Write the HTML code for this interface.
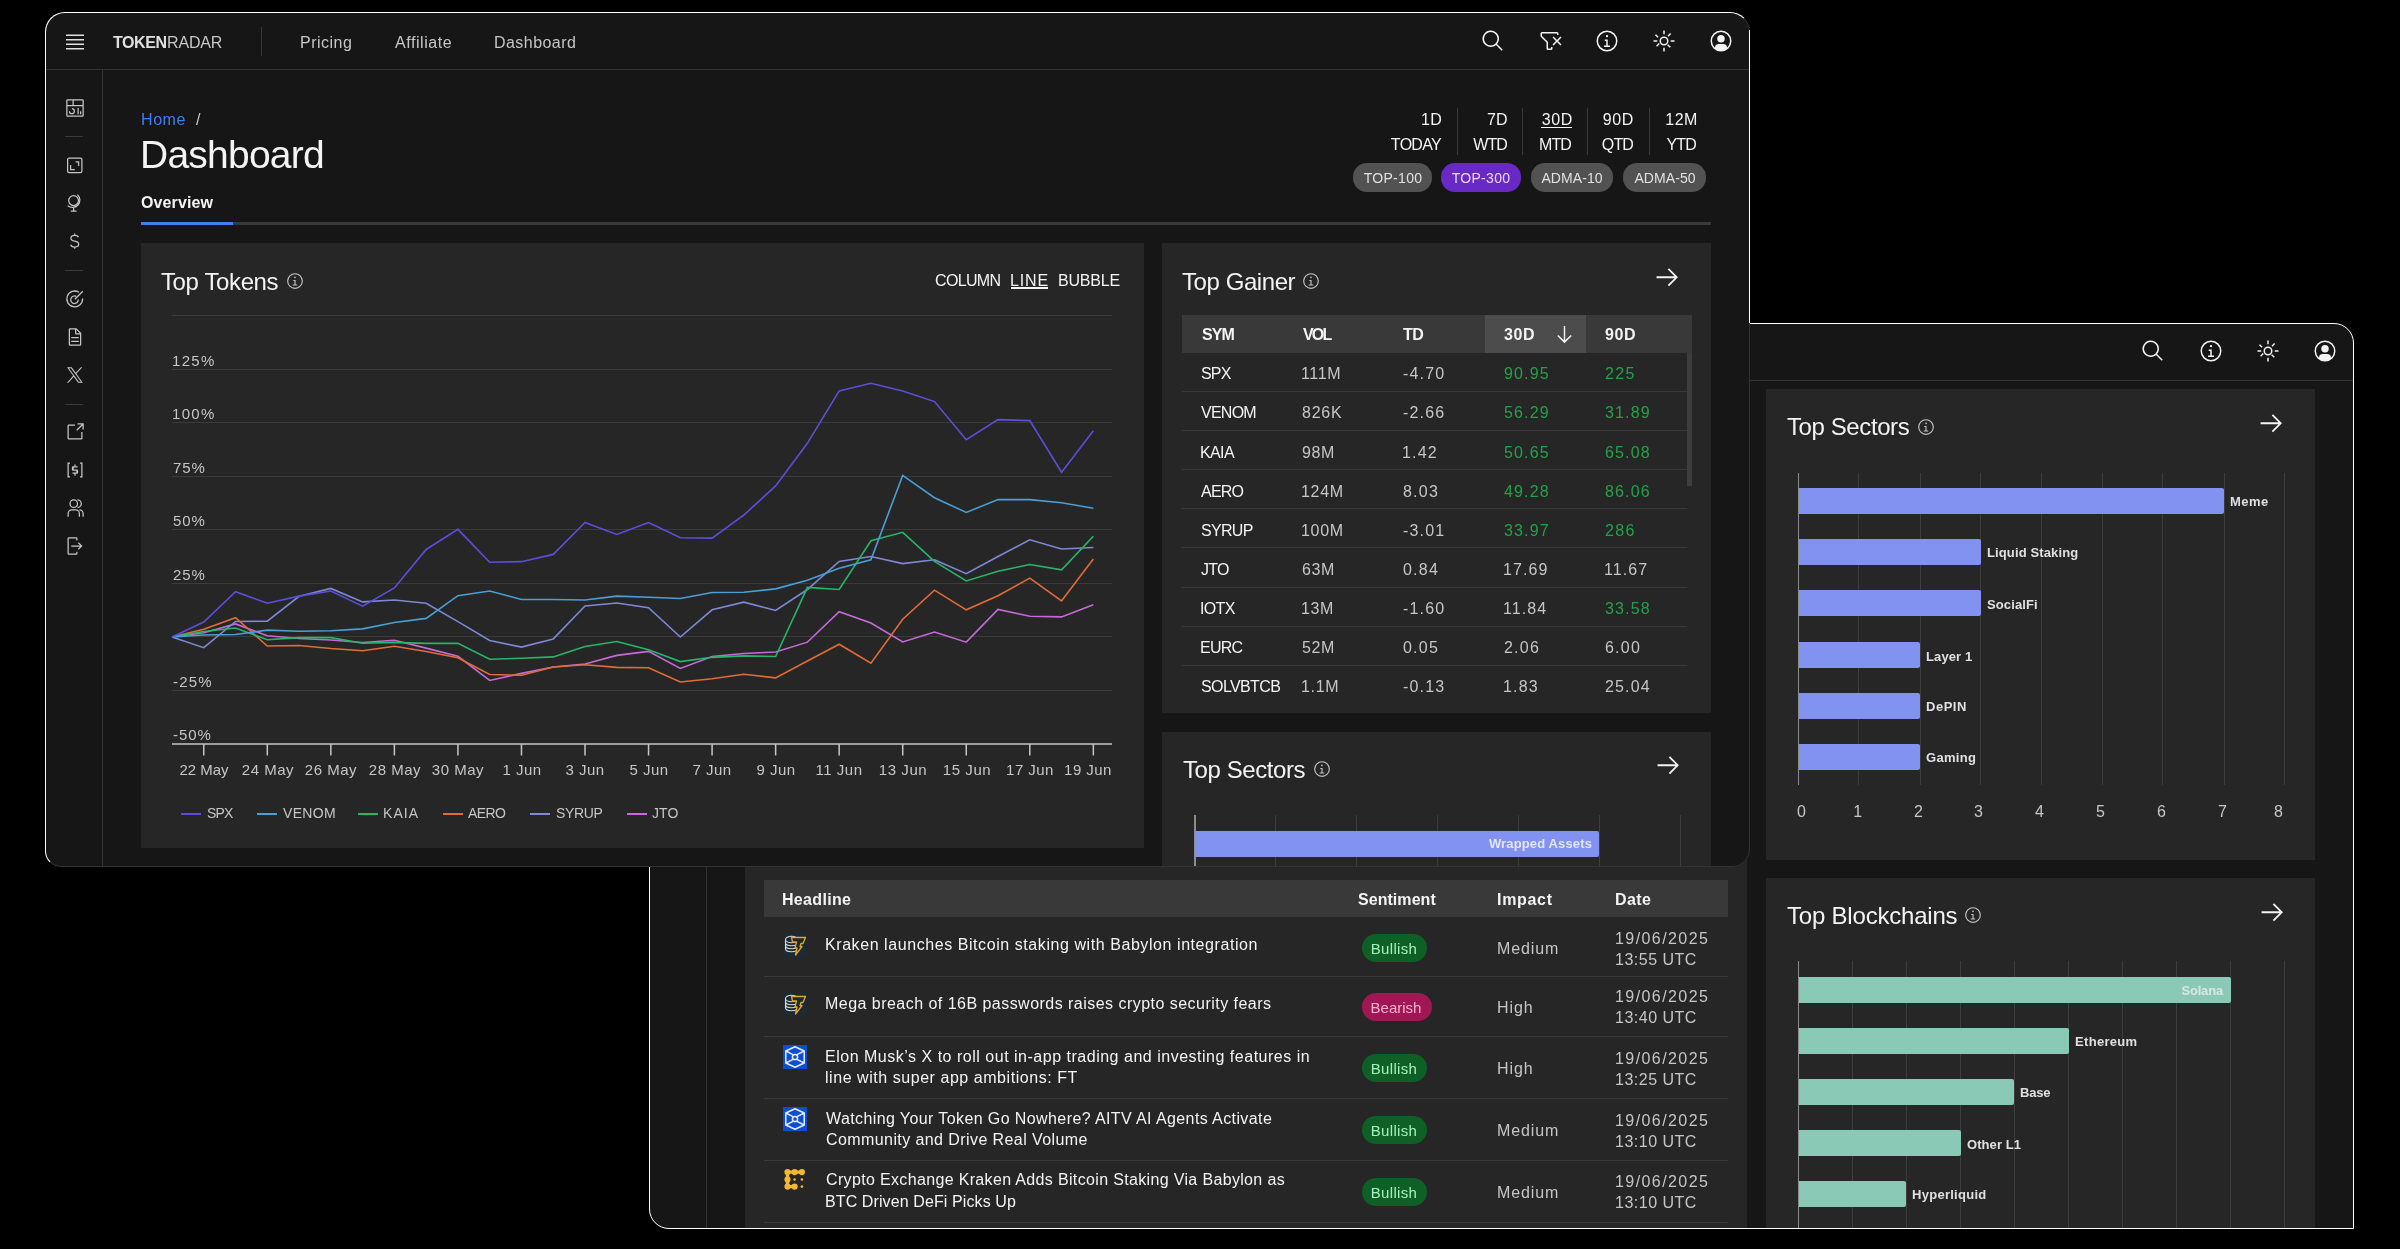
<!DOCTYPE html><html><head><meta charset="utf-8"><style>
html,body{margin:0;padding:0;}
body{width:2400px;height:1249px;background:#000;position:relative;overflow:hidden;font-family:"Liberation Sans", sans-serif;}
.win{position:absolute;overflow:hidden;background:#161616;}
.win div{will-change:transform;}
</style></head><body>
<div class="win" style="left:649px;top:323px;width:1705px;height:906px;border-radius:0 20px 0 20px;z-index:1">
<div style="position:absolute;left:0px;top:57px;width:1705px;height:1px;background:#333333;"></div>
<svg style="position:absolute;left:1492.00px;top:16.00px" width="24" height="24" viewBox="0 0 32 32" fill="#f4f4f4"><path d="M29,27.5859l-7.5521-7.5521a11.0177,11.0177,0,1,0-1.4141,1.4141L27.5859,29ZM4,13a9,9,0,1,1,9,9A9.01,9.01,0,0,1,4,13Z"/></svg>
<svg style="position:absolute;left:1550.00px;top:16.00px" width="24" height="24" viewBox="0 0 32 32" fill="#f4f4f4"><path d="M17 22L17 14 13 14 13 16 15 16 15 22 12 22 12 24 20 24 20 22 17 22zM16 8a1.5 1.5 0 101.5 1.5A1.5 1.5 0 0016 8z"/><path d="M16,30A14,14,0,1,1,30,16,14,14,0,0,1,16,30ZM16,4A12,12,0,1,0,28,16,12,12,0,0,0,16,4Z"/></svg>
<svg style="position:absolute;left:1607.00px;top:16.00px" width="24" height="24" viewBox="0 0 32 32" fill="#f4f4f4"><path d="M16,12.0005a4,4,0,1,1-4,4,4.0045,4.0045,0,0,1,4-4m0-2a6,6,0,1,0,6,6,6,6,0,0,0-6-6Z"/><path d="M5.394 6.813H7.394V11.813H5.394z" transform="rotate(-45 6.394 9.313)"/><path d="M2 15.001H7V17.001H2z"/><path d="M5.394 20.188H10.394V22.188H5.394z" transform="rotate(-45 7.894 21.188)"/><path d="M15 25.001H17V30.001H15z"/><path d="M21.606 20.187H23.606V25.187H21.606z" transform="rotate(-45 22.606 22.687)"/><path d="M25 15.001H30V17.001H25z"/><path d="M20.606 6.813H25.606V8.813H20.606z" transform="rotate(-45 23.106 7.813)"/><path d="M15 2.001H17V7.001H15z"/></svg>
<svg style="position:absolute;left:1663.50px;top:16.00px" width="24" height="24" viewBox="0 0 32 32" fill="#f4f4f4"><path d="M16,8a5,5,0,1,0,5,5A5,5,0,0,0,16,8Z"/><path d="M16,2A14,14,0,1,0,30,16,14.0158,14.0158,0,0,0,16,2Zm7.9925,22.9258A5.0016,5.0016,0,0,0,19,20H13a5.0016,5.0016,0,0,0-4.9925,4.9258,12,12,0,1,1,15.985,0Z"/></svg>
<div style="position:absolute;left:57px;top:58px;width:1px;height:848px;background:#333333;"></div>
<div style="position:absolute;left:96px;top:58px;width:1002px;height:848px;background:#262626;"></div>
<div style="position:absolute;left:1117px;top:66px;width:549px;height:470.5px;background:#262626;"></div>
<div style="position:absolute;left:1117px;top:555px;width:549px;height:351px;background:#262626;"></div>
<div style="position:absolute;left:115px;top:557px;width:964px;height:37px;background:#393939;"></div>
<div style="position:absolute;top:569.35px;font-size:16px;line-height:16px;color:#f4f4f4;font-weight:700;white-space:nowrap;letter-spacing:0.316px;left:133.25px;">Headline</div>
<div style="position:absolute;top:569.35px;font-size:16px;line-height:16px;color:#f4f4f4;font-weight:700;white-space:nowrap;letter-spacing:0.048px;left:708.50px;">Sentiment</div>
<div style="position:absolute;top:569.35px;font-size:16px;line-height:16px;color:#f4f4f4;font-weight:700;white-space:nowrap;letter-spacing:0.692px;left:848.40px;">Impact</div>
<div style="position:absolute;top:569.35px;font-size:16px;line-height:16px;color:#f4f4f4;font-weight:700;white-space:nowrap;letter-spacing:0.406px;left:965.60px;">Date</div>
<svg style="position:absolute;left:134px;top:610px;overflow:visible;" width="24" height="24" viewBox="0 0 24 24"><rect x="0" y="0" width="24" height="24" fill="#1e2a33"/><g fill="none" stroke="#d9d9d9" stroke-width="1.1"><ellipse cx="8.5" cy="6.5" rx="6" ry="3.3"/><path d="M2.5 9.5 q0 3.3 6 3.3 q3 0 5-1"/><path d="M2.5 12.5 q0 3.3 6 3.3 q3 0 5-1"/><path d="M2.5 15.5 q0 3.3 6 3.3 q3 0 5-1"/><path d="M2.5 6.5 V16"/></g><path d="M8.5 4.5 H22.5 L20 10.5 H18 L17 13.5 H19 L12.5 22 L14 15 H12 L13.5 9 H9.5 Z" fill="#1e2a33" stroke="#e0a92a" stroke-width="1.3" stroke-linejoin="round"/></svg>
<div style="position:absolute;top:614.35px;font-size:16px;line-height:16px;color:#f4f4f4;font-weight:400;white-space:nowrap;letter-spacing:0.569px;left:176.25px;">Kraken launches Bitcoin staking with Babylon integration</div>
<div style="position:absolute;left:712.5px;top:611px;width:64.79999999999995px;height:28px;background:#0e6027;border-radius:14px;"></div>
<div style="position:absolute;top:618.20px;font-size:15px;line-height:15px;color:#a7f0ba;font-weight:400;white-space:nowrap;letter-spacing:0.326px;left:245.06px;width:1000px;text-align:center;">Bullish</div>
<div style="position:absolute;top:618.35px;font-size:16px;line-height:16px;color:#c6c6c6;font-weight:400;white-space:nowrap;letter-spacing:0.884px;left:848.40px;">Medium</div>
<div style="position:absolute;top:607.75px;font-size:16px;line-height:16px;color:#c6c6c6;font-weight:400;white-space:nowrap;letter-spacing:1.424px;left:965.60px;">19/06/2025</div>
<div style="position:absolute;top:628.75px;font-size:16px;line-height:16px;color:#c6c6c6;font-weight:400;white-space:nowrap;letter-spacing:0.498px;left:965.60px;">13:55 UTC</div>
<div style="position:absolute;left:115px;top:653px;width:964px;height:1px;background:#393939;"></div>
<svg style="position:absolute;left:134px;top:669px;overflow:visible;" width="24" height="24" viewBox="0 0 24 24"><rect x="0" y="0" width="24" height="24" fill="#1e2a33"/><g fill="none" stroke="#d9d9d9" stroke-width="1.1"><ellipse cx="8.5" cy="6.5" rx="6" ry="3.3"/><path d="M2.5 9.5 q0 3.3 6 3.3 q3 0 5-1"/><path d="M2.5 12.5 q0 3.3 6 3.3 q3 0 5-1"/><path d="M2.5 15.5 q0 3.3 6 3.3 q3 0 5-1"/><path d="M2.5 6.5 V16"/></g><path d="M8.5 4.5 H22.5 L20 10.5 H18 L17 13.5 H19 L12.5 22 L14 15 H12 L13.5 9 H9.5 Z" fill="#1e2a33" stroke="#e0a92a" stroke-width="1.3" stroke-linejoin="round"/></svg>
<div style="position:absolute;top:673.05px;font-size:16px;line-height:16px;color:#f4f4f4;font-weight:400;white-space:nowrap;letter-spacing:0.469px;left:176.25px;">Mega breach of 16B passwords raises crypto security fears</div>
<div style="position:absolute;left:712.5px;top:669.7px;width:69.70000000000005px;height:28.0px;background:#9f1853;border-radius:14px;"></div>
<div style="position:absolute;top:676.90px;font-size:15px;line-height:15px;color:#ffafd2;font-weight:400;white-space:nowrap;letter-spacing:-0.003px;left:247.35px;width:1000px;text-align:center;">Bearish</div>
<div style="position:absolute;top:677.05px;font-size:16px;line-height:16px;color:#c6c6c6;font-weight:400;white-space:nowrap;letter-spacing:0.897px;left:848.40px;">High</div>
<div style="position:absolute;top:666.45px;font-size:16px;line-height:16px;color:#c6c6c6;font-weight:400;white-space:nowrap;letter-spacing:1.424px;left:965.60px;">19/06/2025</div>
<div style="position:absolute;top:687.45px;font-size:16px;line-height:16px;color:#c6c6c6;font-weight:400;white-space:nowrap;letter-spacing:0.498px;left:965.60px;">13:40 UTC</div>
<div style="position:absolute;left:115px;top:712.5px;width:964px;height:1.0px;background:#393939;"></div>
<svg style="position:absolute;left:134px;top:721.7px;overflow:visible;" width="24" height="24" viewBox="0 0 24 24"><rect x="0" y="0" width="24" height="24" fill="#0b4fd0"/><g fill="none" stroke="#e6ecff" stroke-width="1.5" stroke-linejoin="round"><path d="M12 1.8 L21.2 6 V18 L12 22.2 L2.8 18 V6 Z"/><path d="M2.8 6 L10 9.6 M21.2 6 L14 9.6 M2.8 18 L10 14.4 M21.2 18 L14 14.4"/><circle cx="12" cy="12" r="2.6"/></g></svg>
<div style="position:absolute;top:725.65px;font-size:16px;line-height:16px;color:#f4f4f4;font-weight:400;white-space:nowrap;letter-spacing:0.51px;left:176.25px;">Elon Musk’s X to roll out in-app trading and investing features in</div>
<div style="position:absolute;top:747.05px;font-size:16px;line-height:16px;color:#f4f4f4;font-weight:400;white-space:nowrap;letter-spacing:0.547px;left:176.25px;">line with super app ambitions: FT</div>
<div style="position:absolute;left:712.5px;top:730.8px;width:64.79999999999995px;height:28.0px;background:#0e6027;border-radius:14px;"></div>
<div style="position:absolute;top:738.00px;font-size:15px;line-height:15px;color:#a7f0ba;font-weight:400;white-space:nowrap;letter-spacing:0.326px;left:245.06px;width:1000px;text-align:center;">Bullish</div>
<div style="position:absolute;top:738.15px;font-size:16px;line-height:16px;color:#c6c6c6;font-weight:400;white-space:nowrap;letter-spacing:0.897px;left:848.40px;">High</div>
<div style="position:absolute;top:727.55px;font-size:16px;line-height:16px;color:#c6c6c6;font-weight:400;white-space:nowrap;letter-spacing:1.424px;left:965.60px;">19/06/2025</div>
<div style="position:absolute;top:748.55px;font-size:16px;line-height:16px;color:#c6c6c6;font-weight:400;white-space:nowrap;letter-spacing:0.498px;left:965.60px;">13:25 UTC</div>
<div style="position:absolute;left:115px;top:774.5px;width:964px;height:1.0px;background:#393939;"></div>
<svg style="position:absolute;left:134px;top:783.7px;overflow:visible;" width="24" height="24" viewBox="0 0 24 24"><rect x="0" y="0" width="24" height="24" fill="#0b4fd0"/><g fill="none" stroke="#e6ecff" stroke-width="1.5" stroke-linejoin="round"><path d="M12 1.8 L21.2 6 V18 L12 22.2 L2.8 18 V6 Z"/><path d="M2.8 6 L10 9.6 M21.2 6 L14 9.6 M2.8 18 L10 14.4 M21.2 18 L14 14.4"/><circle cx="12" cy="12" r="2.6"/></g></svg>
<div style="position:absolute;top:787.85px;font-size:16px;line-height:16px;color:#f4f4f4;font-weight:400;white-space:nowrap;letter-spacing:0.399px;left:177.25px;">Watching Your Token Go Nowhere? AITV AI Agents Activate</div>
<div style="position:absolute;top:809.25px;font-size:16px;line-height:16px;color:#f4f4f4;font-weight:400;white-space:nowrap;letter-spacing:0.414px;left:177.25px;">Community and Drive Real Volume</div>
<div style="position:absolute;left:712.5px;top:793px;width:64.79999999999995px;height:28px;background:#0e6027;border-radius:14px;"></div>
<div style="position:absolute;top:800.20px;font-size:15px;line-height:15px;color:#a7f0ba;font-weight:400;white-space:nowrap;letter-spacing:0.326px;left:245.06px;width:1000px;text-align:center;">Bullish</div>
<div style="position:absolute;top:800.35px;font-size:16px;line-height:16px;color:#c6c6c6;font-weight:400;white-space:nowrap;letter-spacing:0.884px;left:848.40px;">Medium</div>
<div style="position:absolute;top:789.75px;font-size:16px;line-height:16px;color:#c6c6c6;font-weight:400;white-space:nowrap;letter-spacing:1.424px;left:965.60px;">19/06/2025</div>
<div style="position:absolute;top:810.75px;font-size:16px;line-height:16px;color:#c6c6c6;font-weight:400;white-space:nowrap;letter-spacing:0.498px;left:965.60px;">13:10 UTC</div>
<div style="position:absolute;left:115px;top:837px;width:964px;height:1px;background:#393939;"></div>
<svg style="position:absolute;left:134px;top:847px;overflow:visible;" width="24" height="24" viewBox="0 0 24 24"><path d="M4.5 2.1 H18.9 M4.5 2.1 V16.6 H11.6" stroke="#f0b92e" stroke-width="3.4" fill="none"/><circle cx="4.5" cy="2.1" r="3.1" fill="#f0b92e"/><circle cx="11.6" cy="2.1" r="3.1" fill="#f0b92e"/><circle cx="18.9" cy="2.1" r="3.1" fill="#f0b92e"/><circle cx="4.5" cy="9.5" r="3.1" fill="#f0b92e"/><circle cx="4.5" cy="16.6" r="3.1" fill="#f0b92e"/><circle cx="11.6" cy="16.6" r="3.1" fill="#f0b92e"/><circle cx="11.6" cy="9.5" r="1.3" fill="#f0b92e"/><circle cx="18.9" cy="9.5" r="1.3" fill="#f0b92e"/><circle cx="18.9" cy="16.6" r="1.3" fill="#f0b92e"/></svg>
<div style="position:absolute;top:849.35px;font-size:16px;line-height:16px;color:#f4f4f4;font-weight:400;white-space:nowrap;letter-spacing:0.343px;left:177.25px;">Crypto Exchange Kraken Adds Bitcoin Staking Via Babylon as</div>
<div style="position:absolute;top:870.75px;font-size:16px;line-height:16px;color:#f4f4f4;font-weight:400;white-space:nowrap;letter-spacing:0.105px;left:176.25px;">BTC Driven DeFi Picks Up</div>
<div style="position:absolute;left:712.5px;top:854.5px;width:64.79999999999995px;height:28.0px;background:#0e6027;border-radius:14px;"></div>
<div style="position:absolute;top:861.70px;font-size:15px;line-height:15px;color:#a7f0ba;font-weight:400;white-space:nowrap;letter-spacing:0.326px;left:245.06px;width:1000px;text-align:center;">Bullish</div>
<div style="position:absolute;top:861.85px;font-size:16px;line-height:16px;color:#c6c6c6;font-weight:400;white-space:nowrap;letter-spacing:0.884px;left:848.40px;">Medium</div>
<div style="position:absolute;top:851.25px;font-size:16px;line-height:16px;color:#c6c6c6;font-weight:400;white-space:nowrap;letter-spacing:1.424px;left:965.60px;">19/06/2025</div>
<div style="position:absolute;top:872.25px;font-size:16px;line-height:16px;color:#c6c6c6;font-weight:400;white-space:nowrap;letter-spacing:0.498px;left:965.60px;">13:10 UTC</div>
<div style="position:absolute;left:115px;top:899px;width:964px;height:1px;background:#393939;"></div>
<div style="position:absolute;top:92.28px;font-size:24px;line-height:24px;color:#f4f4f4;font-weight:400;white-space:nowrap;letter-spacing:-0.403px;left:1137.60px;">Top Sectors</div>
<svg style="position:absolute;left:1268.00px;top:94.50px" width="18" height="18" viewBox="0 0 32 32" fill="#c6c6c6"><path d="M17 22L17 14 13 14 13 16 15 16 15 22 12 22 12 24 20 24 20 22 17 22zM16 8a1.5 1.5 0 101.5 1.5A1.5 1.5 0 0016 8z"/><path d="M16,30A14,14,0,1,1,30,16,14,14,0,0,1,16,30ZM16,4A12,12,0,1,0,28,16,12,12,0,0,0,16,4Z"/></svg>
<svg style="position:absolute;left:1608.25px;top:85.75px" width="28.5" height="28.5" viewBox="0 0 32 32" fill="#f4f4f4"><path d="M18 6L16.57 7.393 24.15 15 4 15 4 17 24.15 17 16.57 24.573 18 26 28 16 18 6z"/></svg>
<div style="position:absolute;left:1209px;top:150px;width:1px;height:312px;background:#3d3d3d;"></div>
<div style="position:absolute;left:1271px;top:150px;width:1px;height:312px;background:#3d3d3d;"></div>
<div style="position:absolute;left:1331px;top:150px;width:1px;height:312px;background:#3d3d3d;"></div>
<div style="position:absolute;left:1392px;top:150px;width:1px;height:312px;background:#3d3d3d;"></div>
<div style="position:absolute;left:1453px;top:150px;width:1px;height:312px;background:#3d3d3d;"></div>
<div style="position:absolute;left:1513px;top:150px;width:1px;height:312px;background:#3d3d3d;"></div>
<div style="position:absolute;left:1575px;top:150px;width:1px;height:312px;background:#3d3d3d;"></div>
<div style="position:absolute;left:1635px;top:150px;width:1px;height:312px;background:#3d3d3d;"></div>
<div style="position:absolute;left:1148.8px;top:150px;width:1.400000000000091px;height:312px;background:#8d8d8d;"></div>
<div style="position:absolute;left:1150px;top:165px;width:425px;height:26px;background:#8292f0;border-radius:0 2px 2px 0;"></div>
<div style="position:absolute;top:172.49px;font-size:13px;line-height:13px;color:#e0e0e0;font-weight:700;white-space:nowrap;letter-spacing:0.461px;left:1581.00px;">Meme</div>
<div style="position:absolute;left:1150px;top:216px;width:182px;height:26px;background:#8292f0;border-radius:0 2px 2px 0;"></div>
<div style="position:absolute;top:223.49px;font-size:13px;line-height:13px;color:#e0e0e0;font-weight:700;white-space:nowrap;letter-spacing:0.122px;left:1338.00px;">Liquid Staking</div>
<div style="position:absolute;left:1150px;top:267.29999999999995px;width:182px;height:25.5px;background:#8292f0;border-radius:0 2px 2px 0;"></div>
<div style="position:absolute;top:274.54px;font-size:13px;line-height:13px;color:#e0e0e0;font-weight:700;white-space:nowrap;letter-spacing:0.123px;left:1338.00px;">SocialFi</div>
<div style="position:absolute;left:1150px;top:319.4px;width:121px;height:25.600000000000023px;background:#8292f0;border-radius:0 2px 2px 0;"></div>
<div style="position:absolute;top:326.69px;font-size:13px;line-height:13px;color:#e0e0e0;font-weight:700;white-space:nowrap;letter-spacing:0.116px;left:1277.00px;">Layer 1</div>
<div style="position:absolute;left:1150px;top:370px;width:121px;height:26px;background:#8292f0;border-radius:0 2px 2px 0;"></div>
<div style="position:absolute;top:377.49px;font-size:13px;line-height:13px;color:#e0e0e0;font-weight:700;white-space:nowrap;letter-spacing:0.525px;left:1277.00px;">DePIN</div>
<div style="position:absolute;left:1150px;top:420.6px;width:121px;height:25.899999999999977px;background:#8292f0;border-radius:0 2px 2px 0;"></div>
<div style="position:absolute;top:428.04px;font-size:13px;line-height:13px;color:#e0e0e0;font-weight:700;white-space:nowrap;letter-spacing:0.309px;left:1277.00px;">Gaming</div>
<div style="position:absolute;top:480.85px;font-size:16px;line-height:16px;color:#c6c6c6;font-weight:400;white-space:nowrap;letter-spacing:0.939px;left:653.47px;width:1000px;text-align:center;">0</div>
<div style="position:absolute;top:480.85px;font-size:16px;line-height:16px;color:#c6c6c6;font-weight:400;white-space:nowrap;letter-spacing:0.835px;left:708.92px;width:1000px;text-align:center;">1</div>
<div style="position:absolute;top:480.85px;font-size:16px;line-height:16px;color:#c6c6c6;font-weight:400;white-space:nowrap;letter-spacing:0.939px;left:769.97px;width:1000px;text-align:center;">2</div>
<div style="position:absolute;top:480.85px;font-size:16px;line-height:16px;color:#c6c6c6;font-weight:400;white-space:nowrap;letter-spacing:0.939px;left:830.47px;width:1000px;text-align:center;">3</div>
<div style="position:absolute;top:480.85px;font-size:16px;line-height:16px;color:#c6c6c6;font-weight:400;white-space:nowrap;letter-spacing:0.939px;left:891.47px;width:1000px;text-align:center;">4</div>
<div style="position:absolute;top:480.85px;font-size:16px;line-height:16px;color:#c6c6c6;font-weight:400;white-space:nowrap;letter-spacing:0.939px;left:952.47px;width:1000px;text-align:center;">5</div>
<div style="position:absolute;top:480.85px;font-size:16px;line-height:16px;color:#c6c6c6;font-weight:400;white-space:nowrap;letter-spacing:0.939px;left:1012.97px;width:1000px;text-align:center;">6</div>
<div style="position:absolute;top:480.85px;font-size:16px;line-height:16px;color:#c6c6c6;font-weight:400;white-space:nowrap;letter-spacing:0.939px;left:1073.97px;width:1000px;text-align:center;">7</div>
<div style="position:absolute;top:480.85px;font-size:16px;line-height:16px;color:#c6c6c6;font-weight:400;white-space:nowrap;letter-spacing:0.939px;left:1130.17px;width:1000px;text-align:center;">8</div>
<div style="position:absolute;top:580.58px;font-size:24px;line-height:24px;color:#f4f4f4;font-weight:400;white-space:nowrap;letter-spacing:-0.202px;left:1137.70px;">Top Blockchains</div>
<svg style="position:absolute;left:1315.00px;top:582.50px" width="18" height="18" viewBox="0 0 32 32" fill="#c6c6c6"><path d="M17 22L17 14 13 14 13 16 15 16 15 22 12 22 12 24 20 24 20 22 17 22zM16 8a1.5 1.5 0 101.5 1.5A1.5 1.5 0 0016 8z"/><path d="M16,30A14,14,0,1,1,30,16,14,14,0,0,1,16,30ZM16,4A12,12,0,1,0,28,16,12,12,0,0,0,16,4Z"/></svg>
<svg style="position:absolute;left:1608.75px;top:574.75px" width="28.5" height="28.5" viewBox="0 0 32 32" fill="#f4f4f4"><path d="M18 6L16.57 7.393 24.15 15 4 15 4 17 24.15 17 16.57 24.573 18 26 28 16 18 6z"/></svg>
<div style="position:absolute;left:1203px;top:638px;width:1px;height:268px;background:#3d3d3d;"></div>
<div style="position:absolute;left:1257px;top:638px;width:1px;height:268px;background:#3d3d3d;"></div>
<div style="position:absolute;left:1311px;top:638px;width:1px;height:268px;background:#3d3d3d;"></div>
<div style="position:absolute;left:1365px;top:638px;width:1px;height:268px;background:#3d3d3d;"></div>
<div style="position:absolute;left:1419px;top:638px;width:1px;height:268px;background:#3d3d3d;"></div>
<div style="position:absolute;left:1473px;top:638px;width:1px;height:268px;background:#3d3d3d;"></div>
<div style="position:absolute;left:1527px;top:638px;width:1px;height:268px;background:#3d3d3d;"></div>
<div style="position:absolute;left:1581px;top:638px;width:1px;height:268px;background:#3d3d3d;"></div>
<div style="position:absolute;left:1635px;top:638px;width:1px;height:268px;background:#3d3d3d;"></div>
<div style="position:absolute;left:1148.8px;top:638px;width:1.400000000000091px;height:268px;background:#8d8d8d;"></div>
<div style="position:absolute;left:1150px;top:653.8px;width:431.5px;height:25.800000000000068px;background:#8ac9b6;border-radius:0 2px 2px 0;"></div>
<div style="position:absolute;top:661.19px;font-size:13px;line-height:13px;color:#d9e6e2;font-weight:700;white-space:nowrap;letter-spacing:-0.179px;left:573.62px;width:1000px;text-align:right;">Solana</div>
<div style="position:absolute;left:1150px;top:704.8px;width:269.5999999999999px;height:25.5px;background:#8ac9b6;border-radius:0 2px 2px 0;"></div>
<div style="position:absolute;top:712.04px;font-size:13px;line-height:13px;color:#e0e0e0;font-weight:700;white-space:nowrap;letter-spacing:0.314px;left:1425.60px;">Ethereum</div>
<div style="position:absolute;left:1150px;top:755.5px;width:215px;height:25.799999999999955px;background:#8ac9b6;border-radius:0 2px 2px 0;"></div>
<div style="position:absolute;top:762.89px;font-size:13px;line-height:13px;color:#e0e0e0;font-weight:700;white-space:nowrap;letter-spacing:-0.183px;left:1371.00px;">Base</div>
<div style="position:absolute;left:1150px;top:807.4000000000001px;width:161.5999999999999px;height:25.5px;background:#8ac9b6;border-radius:0 2px 2px 0;"></div>
<div style="position:absolute;top:814.64px;font-size:13px;line-height:13px;color:#e0e0e0;font-weight:700;white-space:nowrap;letter-spacing:0.068px;left:1317.60px;">Other L1</div>
<div style="position:absolute;left:1150px;top:858px;width:107.29999999999995px;height:25.90000000000009px;background:#8ac9b6;border-radius:0 2px 2px 0;"></div>
<div style="position:absolute;top:865.44px;font-size:13px;line-height:13px;color:#e0e0e0;font-weight:700;white-space:nowrap;letter-spacing:0.273px;left:1263.30px;">Hyperliquid</div>
</div>
<div style="position:absolute;left:649px;top:323px;width:1703px;height:904px;border:1px solid #fff;border-radius:0 20px 0 20px;z-index:1"></div>
<div class="win" style="left:45px;top:12px;width:1705px;height:855px;border-radius:20px 20px 18px 16px;z-index:2">
<div style="position:absolute;left:0px;top:57px;width:1705px;height:1px;background:#333333;"></div>
<svg style="position:absolute;left:17.50px;top:17.50px" width="24" height="24" viewBox="0 0 32 32" fill="#e0e0e0"><path d="M4 6H28V8H4zM4 12H28V14H4zM4 18H28V20H4zM4 24H28V26H4z"/></svg>
<div style="position:absolute;top:22.85px;font-size:16px;line-height:16px;color:#e0e0e0;font-weight:700;white-space:nowrap;letter-spacing:-0.414px;left:67.50px;">TOKEN</div>
<div style="position:absolute;top:22.85px;font-size:16px;line-height:16px;color:#c6c6c6;font-weight:400;white-space:nowrap;letter-spacing:-0.163px;left:122.20px;">RADAR</div>
<div style="position:absolute;left:216px;top:15px;width:1px;height:29px;background:#393939;"></div>
<div style="position:absolute;top:22.85px;font-size:16px;line-height:16px;color:#c6c6c6;font-weight:400;white-space:nowrap;letter-spacing:0.499px;left:255.25px;">Pricing</div>
<div style="position:absolute;top:22.85px;font-size:16px;line-height:16px;color:#c6c6c6;font-weight:400;white-space:nowrap;letter-spacing:0.559px;left:349.50px;">Affiliate</div>
<div style="position:absolute;top:22.85px;font-size:16px;line-height:16px;color:#c6c6c6;font-weight:400;white-space:nowrap;letter-spacing:0.453px;left:448.50px;">Dashboard</div>
<svg style="position:absolute;left:1435.50px;top:17.00px" width="24" height="24" viewBox="0 0 32 32" fill="#f4f4f4"><path d="M29,27.5859l-7.5521-7.5521a11.0177,11.0177,0,1,0-1.4141,1.4141L27.5859,29ZM4,13a9,9,0,1,1,9,9A9.01,9.01,0,0,1,4,13Z"/></svg>
<svg style="position:absolute;left:1493.50px;top:17.00px" width="24" height="24" viewBox="0 0 32 32" fill="#f4f4f4"><path d="M30 11.414L28.586 10 24 14.586 19.414 10 18 11.414 22.586 16 18 20.585 19.415 22 24 17.414 28.587 22 30 20.587 25.414 16 30 11.414z"/><path d="M4,4A2,2,0,0,0,2,6V9.1709a2,2,0,0,0,.5859,1.4145L10,18v8a2,2,0,0,0,2,2h4a2,2,0,0,0,2-2V24H16v2H12V17.1709l-.5859-.5855L4,9.1709V6H24V8h2V6a2,2,0,0,0-2-2Z"/></svg>
<svg style="position:absolute;left:1550.00px;top:16.80px" width="24" height="24" viewBox="0 0 32 32" fill="#f4f4f4"><path d="M17 22L17 14 13 14 13 16 15 16 15 22 12 22 12 24 20 24 20 22 17 22zM16 8a1.5 1.5 0 101.5 1.5A1.5 1.5 0 0016 8z"/><path d="M16,30A14,14,0,1,1,30,16,14,14,0,0,1,16,30ZM16,4A12,12,0,1,0,28,16,12,12,0,0,0,16,4Z"/></svg>
<svg style="position:absolute;left:1607.00px;top:17.00px" width="24" height="24" viewBox="0 0 32 32" fill="#f4f4f4"><path d="M16,12.0005a4,4,0,1,1-4,4,4.0045,4.0045,0,0,1,4-4m0-2a6,6,0,1,0,6,6,6,6,0,0,0-6-6Z"/><path d="M5.394 6.813H7.394V11.813H5.394z" transform="rotate(-45 6.394 9.313)"/><path d="M2 15.001H7V17.001H2z"/><path d="M5.394 20.188H10.394V22.188H5.394z" transform="rotate(-45 7.894 21.188)"/><path d="M15 25.001H17V30.001H15z"/><path d="M21.606 20.187H23.606V25.187H21.606z" transform="rotate(-45 22.606 22.687)"/><path d="M25 15.001H30V17.001H25z"/><path d="M20.606 6.813H25.606V8.813H20.606z" transform="rotate(-45 23.106 7.813)"/><path d="M15 2.001H17V7.001H15z"/></svg>
<svg style="position:absolute;left:1663.60px;top:16.80px" width="24" height="24" viewBox="0 0 32 32" fill="#f4f4f4"><path d="M16,8a5,5,0,1,0,5,5A5,5,0,0,0,16,8Z"/><path d="M16,2A14,14,0,1,0,30,16,14.0158,14.0158,0,0,0,16,2Zm7.9925,22.9258A5.0016,5.0016,0,0,0,19,20H13a5.0016,5.0016,0,0,0-4.9925,4.9258,12,12,0,1,1,15.985,0Z"/></svg>
<div style="position:absolute;left:57px;top:58px;width:1px;height:797px;background:#333333;"></div>
<svg style="position:absolute;left:19.50px;top:85.50px" width="20" height="20" viewBox="0 0 32 32" fill="#c6c6c6"><path d="M24 21H26V26H24zM20 16H22V26H20zM11 26a5.0059 5.0059 0 01-5-5H8a3 3 0 103-3V16a5 5 0 010 10z"/><path d="M28,2H4A2.002,2.002,0,0,0,2,4V28a2.0023,2.0023,0,0,0,2,2H28a2.0027,2.0027,0,0,0,2-2V4A2.0023,2.0023,0,0,0,28,2Zm0,9H14V4H28ZM12,4v7H4V4ZM4,28V13H28.0007l.0013,15Z"/></svg>
<svg style="position:absolute;left:19.5px;top:143px;overflow:visible;" width="20" height="20" viewBox="0 0 20 20"><g fill="none" stroke="#c6c6c6" stroke-width="1.25"><rect x="2.6" y="3" width="14.3" height="14.6" rx="1.6"/><path d="M10.6 6.8 H13.6 V11 M5.6 10 V14.7 H9.8"/></g></svg>
<svg style="position:absolute;left:19.5px;top:181px;overflow:visible;" width="20" height="20" viewBox="0 0 20 20"><g fill="none" stroke="#c6c6c6" stroke-width="1.25"><circle cx="8.6" cy="7.6" r="4.9"/><path d="M12.4 1.6 A7.3 7.3 0 0 1 2.6 12.6"/><path d="M8.6 14.9 V18.2 M5.8 18.2 H11.6"/></g></svg>
<svg style="position:absolute;left:19.5px;top:219px;overflow:visible;" width="20" height="20" viewBox="0 0 20 20"><g fill="none" stroke="#c6c6c6" stroke-width="1.25"><path d="M13.4 6.3 C13 5 11.8 4.4 9.7 4.4 C7.3 4.4 5.9 5.5 5.9 7.3 C5.9 9.3 7.7 9.8 9.7 10.2 C11.9 10.6 13.7 11.2 13.7 13.3 C13.7 15 12.2 16 9.8 16 C7.6 16 6.2 15.2 5.7 13.7 M9.7 2.6 V4.4 M9.7 16 V17.8"/></g></svg>
<svg style="position:absolute;left:19.5px;top:277px;overflow:visible;" width="20" height="20" viewBox="0 0 20 20"><g fill="none" stroke="#c6c6c6" stroke-width="1.25"><path d="M14 3.3 A7.9 7.9 0 1 0 17.6 9.5"/><path d="M11.3 7.4 A3.8 3.8 0 1 0 13.3 10.6"/><path d="M9.8 10.2 L17.8 2.3"/></g></svg>
<svg style="position:absolute;left:19.50px;top:315.00px" width="20" height="20" viewBox="0 0 32 32" fill="#c6c6c6"><path d="M25.7,9.3l-7-7A.9087.9087,0,0,0,18,2H8A2.0058,2.0058,0,0,0,6,4V28a2.0058,2.0058,0,0,0,2,2H24a2.0058,2.0058,0,0,0,2-2V10A.9092.9092,0,0,0,25.7,9.3ZM18,4.4,23.6,10H18ZM24,28H8V4h8v6a2.0058,2.0058,0,0,0,2,2h6Z"/><path d="M10 22H22V24H10zM10 16H22V18H10z"/></svg>
<svg style="position:absolute;left:19.50px;top:353.00px" width="20" height="20" viewBox="0 0 32 32" fill="#c6c6c6"><path d="M18.2342 13.9716L27.6464 3.5H25.4161L17.2433 12.5921L10.7155 3.5H3.18738L13.0588 17.2493L3.18738 28.2312H5.41783L14.0486 18.6285L20.9424 28.2312H28.4705L18.2337 13.9716H18.2342ZM15.1791 17.3702L14.1791 15.9983L6.22183 5.0689H9.64764L16.0698 13.8914L17.0698 15.2633L25.4183 26.7311H21.9925L15.1791 17.3707V17.3702Z"/></svg>
<svg style="position:absolute;left:19.50px;top:410.00px" width="20" height="20" viewBox="0 0 32 32" fill="#c6c6c6"><path d="M26,28H6a2.0027,2.0027,0,0,1-2-2V6A2.0027,2.0027,0,0,1,6,4H16V6H6V26H26V16h2V26A2.0027,2.0027,0,0,1,26,28Z"/><path d="M20 2L20 4 26.586 4 18 12.586 19.414 14 28 5.414 28 12 30 12 30 2 20 2z"/></svg>
<svg style="position:absolute;left:19.50px;top:448.00px" width="20" height="20" viewBox="0 0 32 32" fill="#c6c6c6"><path d="M4 4H8V6H6V26H8V28H4zM28 4H24V6H26V26H24V28H28z"/><path d="M20,12V10H17V7H15v3H13a2,2,0,0,0-2,2v3a2,2,0,0,0,2,2h5v3H12v2h3v3h2V22h2a2,2,0,0,0,2-2V17a2,2,0,0,0-2-2H14V12Z"/></svg>
<svg style="position:absolute;left:19.50px;top:486.00px" width="20" height="20" viewBox="0 0 32 32" fill="#c6c6c6"><path d="M30 30H28V25a5.0057 5.0057 0 00-5-5V18a7.0078 7.0078 0 017 7zM24 30H22V25a5.0059 5.0059 0 00-5-5H11a5.0059 5.0059 0 00-5 5v5H4V25a7.0082 7.0082 0 017-7h6a7.0082 7.0082 0 017 7zM20 2V4a5 5 0 010 10v2A7 7 0 0020 2zM14 4A5 5 0 119 9 5 5 0 0114 4m0-2a7 7 0 107 7A7 7 0 0014 2z"/></svg>
<svg style="position:absolute;left:19.50px;top:524.00px" width="20" height="20" viewBox="0 0 32 32" fill="#c6c6c6"><path d="M6,30H18a2.0023,2.0023,0,0,0,2-2V25H18v3H6V4H18V7h2V4a2.0023,2.0023,0,0,0-2-2H6A2.0023,2.0023,0,0,0,4,4V28A2.0023,2.0023,0,0,0,6,30Z"/><path d="M20.586 20.586L24.172 17 10 17 10 15 24.172 15 20.586 11.414 22 10 28 16 22 22 20.586 20.586z"/></svg>
<div style="position:absolute;left:20px;top:124px;width:18px;height:1px;background:#393939;"></div>
<div style="position:absolute;left:20px;top:258px;width:18px;height:1px;background:#393939;"></div>
<div style="position:absolute;left:20px;top:392px;width:18px;height:1px;background:#393939;"></div>
<div style="position:absolute;top:100.10px;font-size:16px;line-height:16px;color:#3f7fee;font-weight:400;white-space:nowrap;letter-spacing:0.573px;left:95.50px;">Home</div>
<div style="position:absolute;top:100.10px;font-size:16px;line-height:16px;color:#c6c6c6;font-weight:400;white-space:nowrap;letter-spacing:0.972px;left:150.50px;">/</div>
<div style="position:absolute;top:123.13px;font-size:39px;line-height:39px;color:#f4f4f4;font-weight:300;white-space:nowrap;letter-spacing:-0.763px;left:94.50px;">Dashboard</div>
<div style="position:absolute;top:183.35px;font-size:16px;line-height:16px;color:#f4f4f4;font-weight:700;white-space:nowrap;letter-spacing:0.113px;left:96.00px;">Overview</div>
<div style="position:absolute;left:96px;top:210px;width:1570px;height:3px;background:#393939;"></div>
<div style="position:absolute;left:96px;top:210px;width:92px;height:3px;background:#3f7fee;"></div>
<div style="position:absolute;top:100.35px;font-size:16px;line-height:16px;color:#f4f4f4;font-weight:400;white-space:nowrap;letter-spacing:0.304px;left:397.30px;width:1000px;text-align:right;">1D</div>
<div style="position:absolute;top:124.95px;font-size:16px;line-height:16px;color:#f4f4f4;font-weight:400;white-space:nowrap;letter-spacing:-0.7px;left:396.30px;width:1000px;text-align:right;">TODAY</div>
<div style="position:absolute;top:100.35px;font-size:16px;line-height:16px;color:#f4f4f4;font-weight:400;white-space:nowrap;letter-spacing:0.32px;left:462.82px;width:1000px;text-align:right;">7D</div>
<div style="position:absolute;top:124.95px;font-size:16px;line-height:16px;color:#f4f4f4;font-weight:400;white-space:nowrap;letter-spacing:-0.93px;left:461.57px;width:1000px;text-align:right;">WTD</div>
<div style="position:absolute;top:100.35px;font-size:16px;line-height:16px;color:#f4f4f4;font-weight:400;white-space:nowrap;letter-spacing:0.617px;left:527.62px;width:1000px;text-align:right;">30D</div>
<div style="position:absolute;top:124.95px;font-size:16px;line-height:16px;color:#f4f4f4;font-weight:400;white-space:nowrap;letter-spacing:-0.858px;left:526.14px;width:1000px;text-align:right;">MTD</div>
<div style="position:absolute;top:100.35px;font-size:16px;line-height:16px;color:#f4f4f4;font-weight:400;white-space:nowrap;letter-spacing:0.617px;left:589.12px;width:1000px;text-align:right;">90D</div>
<div style="position:absolute;top:124.95px;font-size:16px;line-height:16px;color:#f4f4f4;font-weight:400;white-space:nowrap;letter-spacing:-0.862px;left:587.64px;width:1000px;text-align:right;">QTD</div>
<div style="position:absolute;top:100.35px;font-size:16px;line-height:16px;color:#f4f4f4;font-weight:400;white-space:nowrap;letter-spacing:0.558px;left:652.56px;width:1000px;text-align:right;">12M</div>
<div style="position:absolute;top:124.95px;font-size:16px;line-height:16px;color:#f4f4f4;font-weight:400;white-space:nowrap;letter-spacing:-0.816px;left:651.18px;width:1000px;text-align:right;">YTD</div>
<div style="position:absolute;left:1411.5px;top:96px;width:1.0px;height:47px;background:#393939;"></div>
<div style="position:absolute;left:1477px;top:96px;width:1px;height:47px;background:#393939;"></div>
<div style="position:absolute;left:1541.5px;top:96px;width:1.0px;height:47px;background:#393939;"></div>
<div style="position:absolute;left:1603.5px;top:96px;width:1.0px;height:47px;background:#393939;"></div>
<div style="position:absolute;left:1496px;top:115.2px;width:31px;height:1.2000000000000028px;background:#f4f4f4;"></div>
<div style="position:absolute;left:1308px;top:151px;width:79px;height:28.5px;background:#525252;border-radius:14px;"></div>
<div style="position:absolute;top:159.45px;font-size:14px;line-height:14px;color:#e0e0e0;font-weight:400;white-space:nowrap;letter-spacing:0.308px;left:847.65px;width:1000px;text-align:center;">TOP-100</div>
<div style="position:absolute;left:1396px;top:151px;width:80px;height:28.5px;background:#6929c4;border-radius:14px;"></div>
<div style="position:absolute;top:159.45px;font-size:14px;line-height:14px;color:#e8daff;font-weight:400;white-space:nowrap;letter-spacing:0.308px;left:936.15px;width:1000px;text-align:center;">TOP-300</div>
<div style="position:absolute;left:1486px;top:151px;width:82px;height:28.5px;background:#525252;border-radius:14px;"></div>
<div style="position:absolute;top:159.45px;font-size:14px;line-height:14px;color:#e0e0e0;font-weight:400;white-space:nowrap;letter-spacing:0.072px;left:1027.04px;width:1000px;text-align:center;">ADMA-10</div>
<div style="position:absolute;left:1578px;top:151px;width:83px;height:28.5px;background:#525252;border-radius:14px;"></div>
<div style="position:absolute;top:159.45px;font-size:14px;line-height:14px;color:#e0e0e0;font-weight:400;white-space:nowrap;letter-spacing:0.072px;left:1119.54px;width:1000px;text-align:center;">ADMA-50</div>
<div style="position:absolute;left:96px;top:231px;width:1003px;height:604.5px;background:#262626;"></div>
<div style="position:absolute;left:1117px;top:231px;width:549px;height:470px;background:#262626;"></div>
<div style="position:absolute;left:1117px;top:720px;width:549px;height:148px;background:#262626;"></div>
<div style="position:absolute;top:257.78px;font-size:24px;line-height:24px;color:#f4f4f4;font-weight:400;white-space:nowrap;letter-spacing:-0.378px;left:115.80px;">Top Tokens</div>
<svg style="position:absolute;left:241.00px;top:260.00px" width="18" height="18" viewBox="0 0 32 32" fill="#c6c6c6"><path d="M17 22L17 14 13 14 13 16 15 16 15 22 12 22 12 24 20 24 20 22 17 22zM16 8a1.5 1.5 0 101.5 1.5A1.5 1.5 0 0016 8z"/><path d="M16,30A14,14,0,1,1,30,16,14,14,0,0,1,16,30ZM16,4A12,12,0,1,0,28,16,12,12,0,0,0,16,4Z"/></svg>
<div style="position:absolute;top:261.35px;font-size:16px;line-height:16px;color:#f4f4f4;font-weight:400;white-space:nowrap;letter-spacing:-0.656px;left:890.00px;">COLUMN</div>
<div style="position:absolute;top:261.35px;font-size:16px;line-height:16px;color:#f4f4f4;font-weight:400;white-space:nowrap;letter-spacing:0.867px;left:965.00px;">LINE</div>
<div style="position:absolute;left:966px;top:275px;width:37px;height:1.5px;background:#f4f4f4;"></div>
<div style="position:absolute;top:261.35px;font-size:16px;line-height:16px;color:#f4f4f4;font-weight:400;white-space:nowrap;letter-spacing:-0.194px;left:1012.50px;">BUBBLE</div>
<svg style="position:absolute;left:0;top:0" width="1705" height="855"><line x1="127" y1="303.5" x2="1067" y2="303.5" stroke="#3b3b3b" stroke-width="1"/><line x1="127" y1="357.5" x2="1067" y2="357.5" stroke="#3b3b3b" stroke-width="1"/><line x1="127" y1="410.5" x2="1067" y2="410.5" stroke="#3b3b3b" stroke-width="1"/><line x1="127" y1="464.5" x2="1067" y2="464.5" stroke="#3b3b3b" stroke-width="1"/><line x1="127" y1="517.5" x2="1067" y2="517.5" stroke="#3b3b3b" stroke-width="1"/><line x1="127" y1="571.5" x2="1067" y2="571.5" stroke="#3b3b3b" stroke-width="1"/><line x1="127" y1="624.5" x2="1067" y2="624.5" stroke="#3b3b3b" stroke-width="1"/><line x1="127" y1="678.5" x2="1067" y2="678.5" stroke="#3b3b3b" stroke-width="1"/><line x1="127" y1="732" x2="1067" y2="732" stroke="#c6c6c6" stroke-width="1.5"/><line x1="158.77" y1="732" x2="158.77" y2="743.5" stroke="#c6c6c6" stroke-width="1.5"/><line x1="222.31" y1="732" x2="222.31" y2="743.5" stroke="#c6c6c6" stroke-width="1.5"/><line x1="285.85" y1="732" x2="285.85" y2="743.5" stroke="#c6c6c6" stroke-width="1.5"/><line x1="349.39" y1="732" x2="349.39" y2="743.5" stroke="#c6c6c6" stroke-width="1.5"/><line x1="412.93" y1="732" x2="412.93" y2="743.5" stroke="#c6c6c6" stroke-width="1.5"/><line x1="476.47" y1="732" x2="476.47" y2="743.5" stroke="#c6c6c6" stroke-width="1.5"/><line x1="540.01" y1="732" x2="540.01" y2="743.5" stroke="#c6c6c6" stroke-width="1.5"/><line x1="603.55" y1="732" x2="603.55" y2="743.5" stroke="#c6c6c6" stroke-width="1.5"/><line x1="667.09" y1="732" x2="667.09" y2="743.5" stroke="#c6c6c6" stroke-width="1.5"/><line x1="730.63" y1="732" x2="730.63" y2="743.5" stroke="#c6c6c6" stroke-width="1.5"/><line x1="794.17" y1="732" x2="794.17" y2="743.5" stroke="#c6c6c6" stroke-width="1.5"/><line x1="857.71" y1="732" x2="857.71" y2="743.5" stroke="#c6c6c6" stroke-width="1.5"/><line x1="921.25" y1="732" x2="921.25" y2="743.5" stroke="#c6c6c6" stroke-width="1.5"/><line x1="984.79" y1="732" x2="984.79" y2="743.5" stroke="#c6c6c6" stroke-width="1.5"/><line x1="1048.33" y1="732" x2="1048.33" y2="743.5" stroke="#c6c6c6" stroke-width="1.5"/><polyline points="127.00,625.00 158.77,620.72 190.54,611.95 222.31,623.72 254.08,626.50 285.85,628.00 317.62,630.56 349.39,628.21 381.16,636.13 412.93,644.26 444.70,668.44 476.47,661.38 508.24,654.96 540.01,651.96 571.78,643.40 603.55,639.34 635.32,656.46 667.09,644.47 698.86,641.48 730.63,639.98 762.40,630.14 794.17,599.75 825.94,611.09 857.71,629.92 889.48,620.08 921.25,630.14 953.02,597.39 984.79,604.24 1016.56,604.88 1048.33,592.69" fill="none" stroke="#c66ad9" stroke-width="1.6" stroke-linejoin="miter"/><polyline points="127.00,625.00 158.77,635.70 190.54,609.49 222.31,609.16 254.08,584.34 285.85,576.42 317.62,589.90 349.39,587.98 381.16,591.19 412.93,609.59 444.70,628.42 476.47,635.06 508.24,626.93 540.01,593.97 571.78,590.97 603.55,595.68 635.32,625.00 667.09,597.82 698.86,590.12 730.63,598.46 762.40,577.49 794.17,549.46 825.94,544.54 857.71,551.60 889.48,547.75 921.25,561.66 953.02,544.54 984.79,527.84 1016.56,537.05 1048.33,535.55" fill="none" stroke="#7e88d6" stroke-width="1.6" stroke-linejoin="miter"/><polyline points="127.00,625.00 158.77,617.30 190.54,605.74 222.31,633.99 254.08,633.56 285.85,636.56 317.62,638.70 349.39,634.20 381.16,639.55 412.93,645.76 444.70,662.45 476.47,663.31 508.24,654.96 540.01,652.82 571.78,655.39 603.55,655.82 635.32,669.94 667.09,666.73 698.86,662.24 730.63,665.87 762.40,648.97 794.17,632.28 825.94,651.11 857.71,607.24 889.48,578.13 921.25,597.82 953.02,583.70 984.79,566.15 1016.56,588.83 1048.33,547.10" fill="none" stroke="#e26c37" stroke-width="1.6" stroke-linejoin="miter"/><polyline points="127.00,625.00 158.77,619.44 190.54,616.01 222.31,627.78 254.08,625.64 285.85,625.64 317.62,631.21 349.39,630.35 381.16,631.42 412.93,631.21 444.70,647.26 476.47,646.19 508.24,644.90 540.01,634.42 571.78,629.49 603.55,637.84 635.32,649.61 667.09,645.33 698.86,643.83 730.63,644.47 762.40,575.35 794.17,577.49 825.94,528.70 857.71,520.35 889.48,549.46 921.25,568.93 953.02,559.30 984.79,552.45 1016.56,557.80 1048.33,524.21" fill="none" stroke="#25b767" stroke-width="1.6" stroke-linejoin="miter"/><polyline points="127.00,625.00 158.77,623.07 190.54,622.43 222.31,618.15 254.08,619.22 285.85,618.79 317.62,616.87 349.39,610.45 381.16,606.38 412.93,583.70 444.70,578.99 476.47,587.55 508.24,587.55 540.01,587.98 571.78,584.13 603.55,585.20 635.32,586.48 667.09,580.49 698.86,580.27 730.63,576.85 762.40,568.29 794.17,556.31 825.94,547.75 857.71,463.43 889.48,485.69 921.25,500.45 953.02,487.61 984.79,487.61 1016.56,490.82 1048.33,496.17" fill="none" stroke="#48a0d6" stroke-width="1.6" stroke-linejoin="miter"/><polyline points="127.00,625.00 158.77,610.02 190.54,579.63 222.31,591.19 254.08,584.13 285.85,578.99 317.62,594.18 349.39,575.99 381.16,537.47 412.93,517.36 444.70,550.31 476.47,549.67 508.24,542.40 540.01,510.51 571.78,522.49 603.55,510.51 635.32,525.70 667.09,526.13 698.86,503.02 730.63,473.92 762.40,431.33 794.17,378.90 825.94,371.20 857.71,378.90 889.48,389.60 921.25,427.69 953.02,407.58 984.79,408.65 1016.56,460.22 1048.33,418.70" fill="none" stroke="#5b4fd9" stroke-width="1.6" stroke-linejoin="miter"/></svg>
<div style="position:absolute;top:340.70px;font-size:15px;line-height:15px;color:#c6c6c6;font-weight:400;white-space:nowrap;letter-spacing:1.324px;left:126.50px;">125%</div>
<div style="position:absolute;top:394.20px;font-size:15px;line-height:15px;color:#c6c6c6;font-weight:400;white-space:nowrap;letter-spacing:1.324px;left:126.50px;">100%</div>
<div style="position:absolute;top:447.70px;font-size:15px;line-height:15px;color:#c6c6c6;font-weight:400;white-space:nowrap;letter-spacing:0.958px;left:127.50px;">75%</div>
<div style="position:absolute;top:501.20px;font-size:15px;line-height:15px;color:#c6c6c6;font-weight:400;white-space:nowrap;letter-spacing:0.958px;left:127.50px;">50%</div>
<div style="position:absolute;top:554.70px;font-size:15px;line-height:15px;color:#c6c6c6;font-weight:400;white-space:nowrap;letter-spacing:0.958px;left:127.50px;">25%</div>
<div style="position:absolute;top:661.70px;font-size:15px;line-height:15px;color:#c6c6c6;font-weight:400;white-space:nowrap;letter-spacing:1.207px;left:127.50px;">-25%</div>
<div style="position:absolute;top:715.20px;font-size:15px;line-height:15px;color:#c6c6c6;font-weight:400;white-space:nowrap;letter-spacing:0.94px;left:127.50px;">-50%</div>
<div style="position:absolute;top:749.80px;font-size:15px;line-height:15px;color:#c6c6c6;font-weight:400;white-space:nowrap;letter-spacing:0.002px;left:-341.23px;width:1000px;text-align:center;">22 May</div>
<div style="position:absolute;top:749.80px;font-size:15px;line-height:15px;color:#c6c6c6;font-weight:400;white-space:nowrap;letter-spacing:0.515px;left:-277.43px;width:1000px;text-align:center;">24 May</div>
<div style="position:absolute;top:749.80px;font-size:15px;line-height:15px;color:#c6c6c6;font-weight:400;white-space:nowrap;letter-spacing:0.515px;left:-213.89px;width:1000px;text-align:center;">26 May</div>
<div style="position:absolute;top:749.80px;font-size:15px;line-height:15px;color:#c6c6c6;font-weight:400;white-space:nowrap;letter-spacing:0.515px;left:-150.35px;width:1000px;text-align:center;">28 May</div>
<div style="position:absolute;top:749.80px;font-size:15px;line-height:15px;color:#c6c6c6;font-weight:400;white-space:nowrap;letter-spacing:0.515px;left:-86.81px;width:1000px;text-align:center;">30 May</div>
<div style="position:absolute;top:749.80px;font-size:15px;line-height:15px;color:#c6c6c6;font-weight:400;white-space:nowrap;letter-spacing:0.482px;left:-23.29px;width:1000px;text-align:center;">1 Jun</div>
<div style="position:absolute;top:749.80px;font-size:15px;line-height:15px;color:#c6c6c6;font-weight:400;white-space:nowrap;letter-spacing:0.496px;left:40.26px;width:1000px;text-align:center;">3 Jun</div>
<div style="position:absolute;top:749.80px;font-size:15px;line-height:15px;color:#c6c6c6;font-weight:400;white-space:nowrap;letter-spacing:0.496px;left:103.80px;width:1000px;text-align:center;">5 Jun</div>
<div style="position:absolute;top:749.80px;font-size:15px;line-height:15px;color:#c6c6c6;font-weight:400;white-space:nowrap;letter-spacing:0.496px;left:167.34px;width:1000px;text-align:center;">7 Jun</div>
<div style="position:absolute;top:749.80px;font-size:15px;line-height:15px;color:#c6c6c6;font-weight:400;white-space:nowrap;letter-spacing:0.496px;left:230.88px;width:1000px;text-align:center;">9 Jun</div>
<div style="position:absolute;top:749.80px;font-size:15px;line-height:15px;color:#c6c6c6;font-weight:400;white-space:nowrap;letter-spacing:0.543px;left:294.44px;width:1000px;text-align:center;">11 Jun</div>
<div style="position:absolute;top:749.80px;font-size:15px;line-height:15px;color:#c6c6c6;font-weight:400;white-space:nowrap;letter-spacing:0.557px;left:357.99px;width:1000px;text-align:center;">13 Jun</div>
<div style="position:absolute;top:749.80px;font-size:15px;line-height:15px;color:#c6c6c6;font-weight:400;white-space:nowrap;letter-spacing:0.557px;left:421.53px;width:1000px;text-align:center;">15 Jun</div>
<div style="position:absolute;top:749.80px;font-size:15px;line-height:15px;color:#c6c6c6;font-weight:400;white-space:nowrap;letter-spacing:0.461px;left:485.02px;width:1000px;text-align:center;">17 Jun</div>
<div style="position:absolute;top:749.80px;font-size:15px;line-height:15px;color:#c6c6c6;font-weight:400;white-space:nowrap;letter-spacing:0.461px;left:543.23px;width:1000px;text-align:center;">19 Jun</div>
<div style="position:absolute;left:136px;top:800.5px;width:20px;height:1.5px;background:#5b4fd9;"></div>
<div style="position:absolute;top:793.95px;font-size:14px;line-height:14px;color:#c6c6c6;font-weight:400;white-space:nowrap;letter-spacing:-0.888px;left:161.50px;">SPX</div>
<div style="position:absolute;left:212px;top:800.5px;width:20px;height:1.5px;background:#48a0d6;"></div>
<div style="position:absolute;top:793.95px;font-size:14px;line-height:14px;color:#c6c6c6;font-weight:400;white-space:nowrap;letter-spacing:0.331px;left:237.50px;">VENOM</div>
<div style="position:absolute;left:313px;top:800.5px;width:20px;height:1.5px;background:#25b767;"></div>
<div style="position:absolute;top:793.95px;font-size:14px;line-height:14px;color:#c6c6c6;font-weight:400;white-space:nowrap;letter-spacing:1.078px;left:337.50px;">KAIA</div>
<div style="position:absolute;left:397.6px;top:800.5px;width:20.0px;height:1.5px;background:#e26c37;"></div>
<div style="position:absolute;top:793.95px;font-size:14px;line-height:14px;color:#c6c6c6;font-weight:400;white-space:nowrap;letter-spacing:-0.629px;left:423.10px;">AERO</div>
<div style="position:absolute;left:485.29999999999995px;top:800.5px;width:20.0px;height:1.5px;background:#7e88d6;"></div>
<div style="position:absolute;top:793.95px;font-size:14px;line-height:14px;color:#c6c6c6;font-weight:400;white-space:nowrap;letter-spacing:-0.374px;left:510.80px;">SYRUP</div>
<div style="position:absolute;left:581.6px;top:800.5px;width:20.0px;height:1.5px;background:#c66ad9;"></div>
<div style="position:absolute;top:793.95px;font-size:14px;line-height:14px;color:#c6c6c6;font-weight:400;white-space:nowrap;letter-spacing:0.051px;left:607.10px;">JTO</div>
<div style="position:absolute;top:257.58px;font-size:24px;line-height:24px;color:#f4f4f4;font-weight:400;white-space:nowrap;letter-spacing:-0.423px;left:1137.40px;">Top Gainer</div>
<svg style="position:absolute;left:1257.40px;top:260.00px" width="18" height="18" viewBox="0 0 32 32" fill="#c6c6c6"><path d="M17 22L17 14 13 14 13 16 15 16 15 22 12 22 12 24 20 24 20 22 17 22zM16 8a1.5 1.5 0 101.5 1.5A1.5 1.5 0 0016 8z"/><path d="M16,30A14,14,0,1,1,30,16,14,14,0,0,1,16,30ZM16,4A12,12,0,1,0,28,16,12,12,0,0,0,16,4Z"/></svg>
<svg style="position:absolute;left:1608.45px;top:251.15px" width="28.5" height="28.5" viewBox="0 0 32 32" fill="#f4f4f4"><path d="M18 6L16.57 7.393 24.15 15 4 15 4 17 24.15 17 16.57 24.573 18 26 28 16 18 6z"/></svg>
<div style="position:absolute;left:1137px;top:303px;width:510px;height:38px;background:#393939;"></div>
<div style="position:absolute;left:1440px;top:303px;width:101px;height:38px;background:#4c4c4c;"></div>
<div style="position:absolute;top:315.35px;font-size:16px;line-height:16px;color:#f4f4f4;font-weight:700;white-space:nowrap;letter-spacing:-0.972px;left:1156.50px;">SYM</div>
<div style="position:absolute;top:315.35px;font-size:16px;line-height:16px;color:#f4f4f4;font-weight:700;white-space:nowrap;letter-spacing:-1.859px;left:1257.60px;">VOL</div>
<div style="position:absolute;top:315.35px;font-size:16px;line-height:16px;color:#f4f4f4;font-weight:700;white-space:nowrap;letter-spacing:-0.573px;left:1358.00px;">TD</div>
<div style="position:absolute;top:315.35px;font-size:16px;line-height:16px;color:#f4f4f4;font-weight:700;white-space:nowrap;letter-spacing:0.602px;left:1459.40px;">30D</div>
<div style="position:absolute;top:315.35px;font-size:16px;line-height:16px;color:#f4f4f4;font-weight:700;white-space:nowrap;letter-spacing:0.552px;left:1560.30px;">90D</div>
<svg style="position:absolute;left:1507.70px;top:310.50px" width="23" height="23" viewBox="0 0 32 32" fill="#f4f4f4"><path d="M24.59 16.59L17 24.17 17 4 15 4 15 24.17 7.41 16.59 6 18 16 28 26 18 24.59 16.59z"/></svg>
<div style="position:absolute;top:354.35px;font-size:16px;line-height:16px;color:#f4f4f4;font-weight:400;white-space:nowrap;letter-spacing:-0.839px;left:1156.00px;">SPX</div>
<div style="position:absolute;top:354.35px;font-size:16px;line-height:16px;color:#c6c6c6;font-weight:400;white-space:nowrap;letter-spacing:0.633px;left:1256.20px;">111M</div>
<div style="position:absolute;top:354.35px;font-size:16px;line-height:16px;color:#c6c6c6;font-weight:400;white-space:nowrap;letter-spacing:1.174px;left:1358.00px;">-4.70</div>
<div style="position:absolute;top:354.35px;font-size:16px;line-height:16px;color:#24a148;font-weight:400;white-space:nowrap;letter-spacing:1.147px;left:1459.30px;">90.95</div>
<div style="position:absolute;top:354.35px;font-size:16px;line-height:16px;color:#24a148;font-weight:400;white-space:nowrap;letter-spacing:1.398px;left:1560.00px;">225</div>
<div style="position:absolute;left:1137px;top:379.0px;width:505px;height:1.0px;background:#393939;"></div>
<div style="position:absolute;top:393.45px;font-size:16px;line-height:16px;color:#f4f4f4;font-weight:400;white-space:nowrap;letter-spacing:-0.757px;left:1156.00px;">VENOM</div>
<div style="position:absolute;top:393.45px;font-size:16px;line-height:16px;color:#c6c6c6;font-weight:400;white-space:nowrap;letter-spacing:0.75px;left:1257.20px;">826K</div>
<div style="position:absolute;top:393.45px;font-size:16px;line-height:16px;color:#c6c6c6;font-weight:400;white-space:nowrap;letter-spacing:1.174px;left:1358.00px;">-2.66</div>
<div style="position:absolute;top:393.45px;font-size:16px;line-height:16px;color:#24a148;font-weight:400;white-space:nowrap;letter-spacing:1.147px;left:1459.30px;">56.29</div>
<div style="position:absolute;top:393.45px;font-size:16px;line-height:16px;color:#24a148;font-weight:400;white-space:nowrap;letter-spacing:1.147px;left:1560.00px;">31.89</div>
<div style="position:absolute;left:1137px;top:418.1px;width:505px;height:1.0px;background:#393939;"></div>
<div style="position:absolute;top:432.55px;font-size:16px;line-height:16px;color:#f4f4f4;font-weight:400;white-space:nowrap;letter-spacing:-0.619px;left:1155.00px;">KAIA</div>
<div style="position:absolute;top:432.55px;font-size:16px;line-height:16px;color:#c6c6c6;font-weight:400;white-space:nowrap;letter-spacing:0.577px;left:1257.20px;">98M</div>
<div style="position:absolute;top:432.55px;font-size:16px;line-height:16px;color:#c6c6c6;font-weight:400;white-space:nowrap;letter-spacing:1.181px;left:1357.00px;">1.42</div>
<div style="position:absolute;top:432.55px;font-size:16px;line-height:16px;color:#24a148;font-weight:400;white-space:nowrap;letter-spacing:1.147px;left:1459.30px;">50.65</div>
<div style="position:absolute;top:432.55px;font-size:16px;line-height:16px;color:#24a148;font-weight:400;white-space:nowrap;letter-spacing:1.147px;left:1560.00px;">65.08</div>
<div style="position:absolute;left:1137px;top:457.2px;width:505px;height:1.0px;background:#393939;"></div>
<div style="position:absolute;top:471.65px;font-size:16px;line-height:16px;color:#f4f4f4;font-weight:400;white-space:nowrap;letter-spacing:-0.776px;left:1156.00px;">AERO</div>
<div style="position:absolute;top:471.65px;font-size:16px;line-height:16px;color:#c6c6c6;font-weight:400;white-space:nowrap;letter-spacing:0.675px;left:1256.20px;">124M</div>
<div style="position:absolute;top:471.65px;font-size:16px;line-height:16px;color:#c6c6c6;font-weight:400;white-space:nowrap;letter-spacing:1.22px;left:1358.00px;">8.03</div>
<div style="position:absolute;top:471.65px;font-size:16px;line-height:16px;color:#24a148;font-weight:400;white-space:nowrap;letter-spacing:1.147px;left:1459.30px;">49.28</div>
<div style="position:absolute;top:471.65px;font-size:16px;line-height:16px;color:#24a148;font-weight:400;white-space:nowrap;letter-spacing:1.147px;left:1560.00px;">86.06</div>
<div style="position:absolute;left:1137px;top:496.3px;width:505px;height:1.0px;background:#393939;"></div>
<div style="position:absolute;top:510.75px;font-size:16px;line-height:16px;color:#f4f4f4;font-weight:400;white-space:nowrap;letter-spacing:-0.706px;left:1156.00px;">SYRUP</div>
<div style="position:absolute;top:510.75px;font-size:16px;line-height:16px;color:#c6c6c6;font-weight:400;white-space:nowrap;letter-spacing:0.675px;left:1256.20px;">100M</div>
<div style="position:absolute;top:510.75px;font-size:16px;line-height:16px;color:#c6c6c6;font-weight:400;white-space:nowrap;letter-spacing:1.174px;left:1358.00px;">-3.01</div>
<div style="position:absolute;top:510.75px;font-size:16px;line-height:16px;color:#24a148;font-weight:400;white-space:nowrap;letter-spacing:1.147px;left:1459.30px;">33.97</div>
<div style="position:absolute;top:510.75px;font-size:16px;line-height:16px;color:#24a148;font-weight:400;white-space:nowrap;letter-spacing:1.398px;left:1560.00px;">286</div>
<div style="position:absolute;left:1137px;top:535.4px;width:505px;height:1.0px;background:#393939;"></div>
<div style="position:absolute;top:549.85px;font-size:16px;line-height:16px;color:#f4f4f4;font-weight:400;white-space:nowrap;letter-spacing:-0.765px;left:1156.00px;">JTO</div>
<div style="position:absolute;top:549.85px;font-size:16px;line-height:16px;color:#c6c6c6;font-weight:400;white-space:nowrap;letter-spacing:0.577px;left:1257.20px;">63M</div>
<div style="position:absolute;top:549.85px;font-size:16px;line-height:16px;color:#c6c6c6;font-weight:400;white-space:nowrap;letter-spacing:1.22px;left:1358.00px;">0.84</div>
<div style="position:absolute;top:549.85px;font-size:16px;line-height:16px;color:#c6c6c6;font-weight:400;white-space:nowrap;letter-spacing:1.119px;left:1458.30px;">17.69</div>
<div style="position:absolute;top:549.85px;font-size:16px;line-height:16px;color:#c6c6c6;font-weight:400;white-space:nowrap;letter-spacing:1.085px;left:1559.00px;">11.67</div>
<div style="position:absolute;left:1137px;top:574.5px;width:505px;height:1.0px;background:#393939;"></div>
<div style="position:absolute;top:588.95px;font-size:16px;line-height:16px;color:#f4f4f4;font-weight:400;white-space:nowrap;letter-spacing:-0.634px;left:1155.00px;">IOTX</div>
<div style="position:absolute;top:588.95px;font-size:16px;line-height:16px;color:#c6c6c6;font-weight:400;white-space:nowrap;letter-spacing:0.558px;left:1256.20px;">13M</div>
<div style="position:absolute;top:588.95px;font-size:16px;line-height:16px;color:#c6c6c6;font-weight:400;white-space:nowrap;letter-spacing:1.174px;left:1358.00px;">-1.60</div>
<div style="position:absolute;top:588.95px;font-size:16px;line-height:16px;color:#c6c6c6;font-weight:400;white-space:nowrap;letter-spacing:1.085px;left:1458.30px;">11.84</div>
<div style="position:absolute;top:588.95px;font-size:16px;line-height:16px;color:#24a148;font-weight:400;white-space:nowrap;letter-spacing:1.147px;left:1560.00px;">33.58</div>
<div style="position:absolute;left:1137px;top:613.6px;width:505px;height:1.0px;background:#393939;"></div>
<div style="position:absolute;top:628.05px;font-size:16px;line-height:16px;color:#f4f4f4;font-weight:400;white-space:nowrap;letter-spacing:-0.757px;left:1155.00px;">EURC</div>
<div style="position:absolute;top:628.05px;font-size:16px;line-height:16px;color:#c6c6c6;font-weight:400;white-space:nowrap;letter-spacing:0.577px;left:1257.20px;">52M</div>
<div style="position:absolute;top:628.05px;font-size:16px;line-height:16px;color:#c6c6c6;font-weight:400;white-space:nowrap;letter-spacing:1.22px;left:1358.00px;">0.05</div>
<div style="position:absolute;top:628.05px;font-size:16px;line-height:16px;color:#c6c6c6;font-weight:400;white-space:nowrap;letter-spacing:1.22px;left:1459.30px;">2.06</div>
<div style="position:absolute;top:628.05px;font-size:16px;line-height:16px;color:#c6c6c6;font-weight:400;white-space:nowrap;letter-spacing:1.22px;left:1560.00px;">6.00</div>
<div style="position:absolute;left:1137px;top:652.7px;width:505px;height:1.0px;background:#393939;"></div>
<div style="position:absolute;top:667.15px;font-size:16px;line-height:16px;color:#f4f4f4;font-weight:400;white-space:nowrap;letter-spacing:-0.619px;left:1156.00px;">SOLVBTCB</div>
<div style="position:absolute;top:667.15px;font-size:16px;line-height:16px;color:#c6c6c6;font-weight:400;white-space:nowrap;letter-spacing:0.651px;left:1256.20px;">1.1M</div>
<div style="position:absolute;top:667.15px;font-size:16px;line-height:16px;color:#c6c6c6;font-weight:400;white-space:nowrap;letter-spacing:1.174px;left:1358.00px;">-0.13</div>
<div style="position:absolute;top:667.15px;font-size:16px;line-height:16px;color:#c6c6c6;font-weight:400;white-space:nowrap;letter-spacing:1.181px;left:1458.30px;">1.83</div>
<div style="position:absolute;top:667.15px;font-size:16px;line-height:16px;color:#c6c6c6;font-weight:400;white-space:nowrap;letter-spacing:1.147px;left:1560.00px;">25.04</div>
<div style="position:absolute;left:1642px;top:341px;width:5px;height:133px;background:#3d3d3d;"></div>
<div style="position:absolute;top:746.08px;font-size:24px;line-height:24px;color:#f4f4f4;font-weight:400;white-space:nowrap;letter-spacing:-0.413px;left:1138.00px;">Top Sectors</div>
<svg style="position:absolute;left:1268.00px;top:748.00px" width="18" height="18" viewBox="0 0 32 32" fill="#c6c6c6"><path d="M17 22L17 14 13 14 13 16 15 16 15 22 12 22 12 24 20 24 20 22 17 22zM16 8a1.5 1.5 0 101.5 1.5A1.5 1.5 0 0016 8z"/><path d="M16,30A14,14,0,1,1,30,16,14,14,0,0,1,16,30ZM16,4A12,12,0,1,0,28,16,12,12,0,0,0,16,4Z"/></svg>
<svg style="position:absolute;left:1608.75px;top:739.35px" width="28.5" height="28.5" viewBox="0 0 32 32" fill="#f4f4f4"><path d="M18 6L16.57 7.393 24.15 15 4 15 4 17 24.15 17 16.57 24.573 18 26 28 16 18 6z"/></svg>
<div style="position:absolute;left:1230px;top:803px;width:1px;height:65px;background:#3d3d3d;"></div>
<div style="position:absolute;left:1311px;top:803px;width:1px;height:65px;background:#3d3d3d;"></div>
<div style="position:absolute;left:1392px;top:803px;width:1px;height:65px;background:#3d3d3d;"></div>
<div style="position:absolute;left:1473px;top:803px;width:1px;height:65px;background:#3d3d3d;"></div>
<div style="position:absolute;left:1554px;top:803px;width:1px;height:65px;background:#3d3d3d;"></div>
<div style="position:absolute;left:1635px;top:803px;width:1px;height:65px;background:#3d3d3d;"></div>
<div style="position:absolute;left:1149px;top:803px;width:1.5px;height:65px;background:#8d8d8d;"></div>
<div style="position:absolute;left:1150px;top:819px;width:404px;height:26px;background:#8292f0;border-radius:0 2px 2px 0;"></div>
<div style="position:absolute;top:825.09px;font-size:13px;line-height:13px;color:#e2e5f3;font-weight:700;white-space:nowrap;letter-spacing:0.139px;left:547.14px;width:1000px;text-align:right;">Wrapped Assets</div>
</div>
<div style="position:absolute;left:45px;top:12px;width:1703px;height:853px;border:1px solid #333;border-radius:20px 20px 18px 16px;z-index:3"></div>
<div style="position:absolute;left:45px;top:12px;width:1703px;height:853px;border:1px solid transparent;border-top-color:#fff;border-left-color:#fff;border-radius:20px 20px 18px 16px;z-index:3"></div>
<div style="position:absolute;left:1749px;top:30px;width:1px;height:293px;background:#ffffff;z-index:4;"></div>
</body></html>
